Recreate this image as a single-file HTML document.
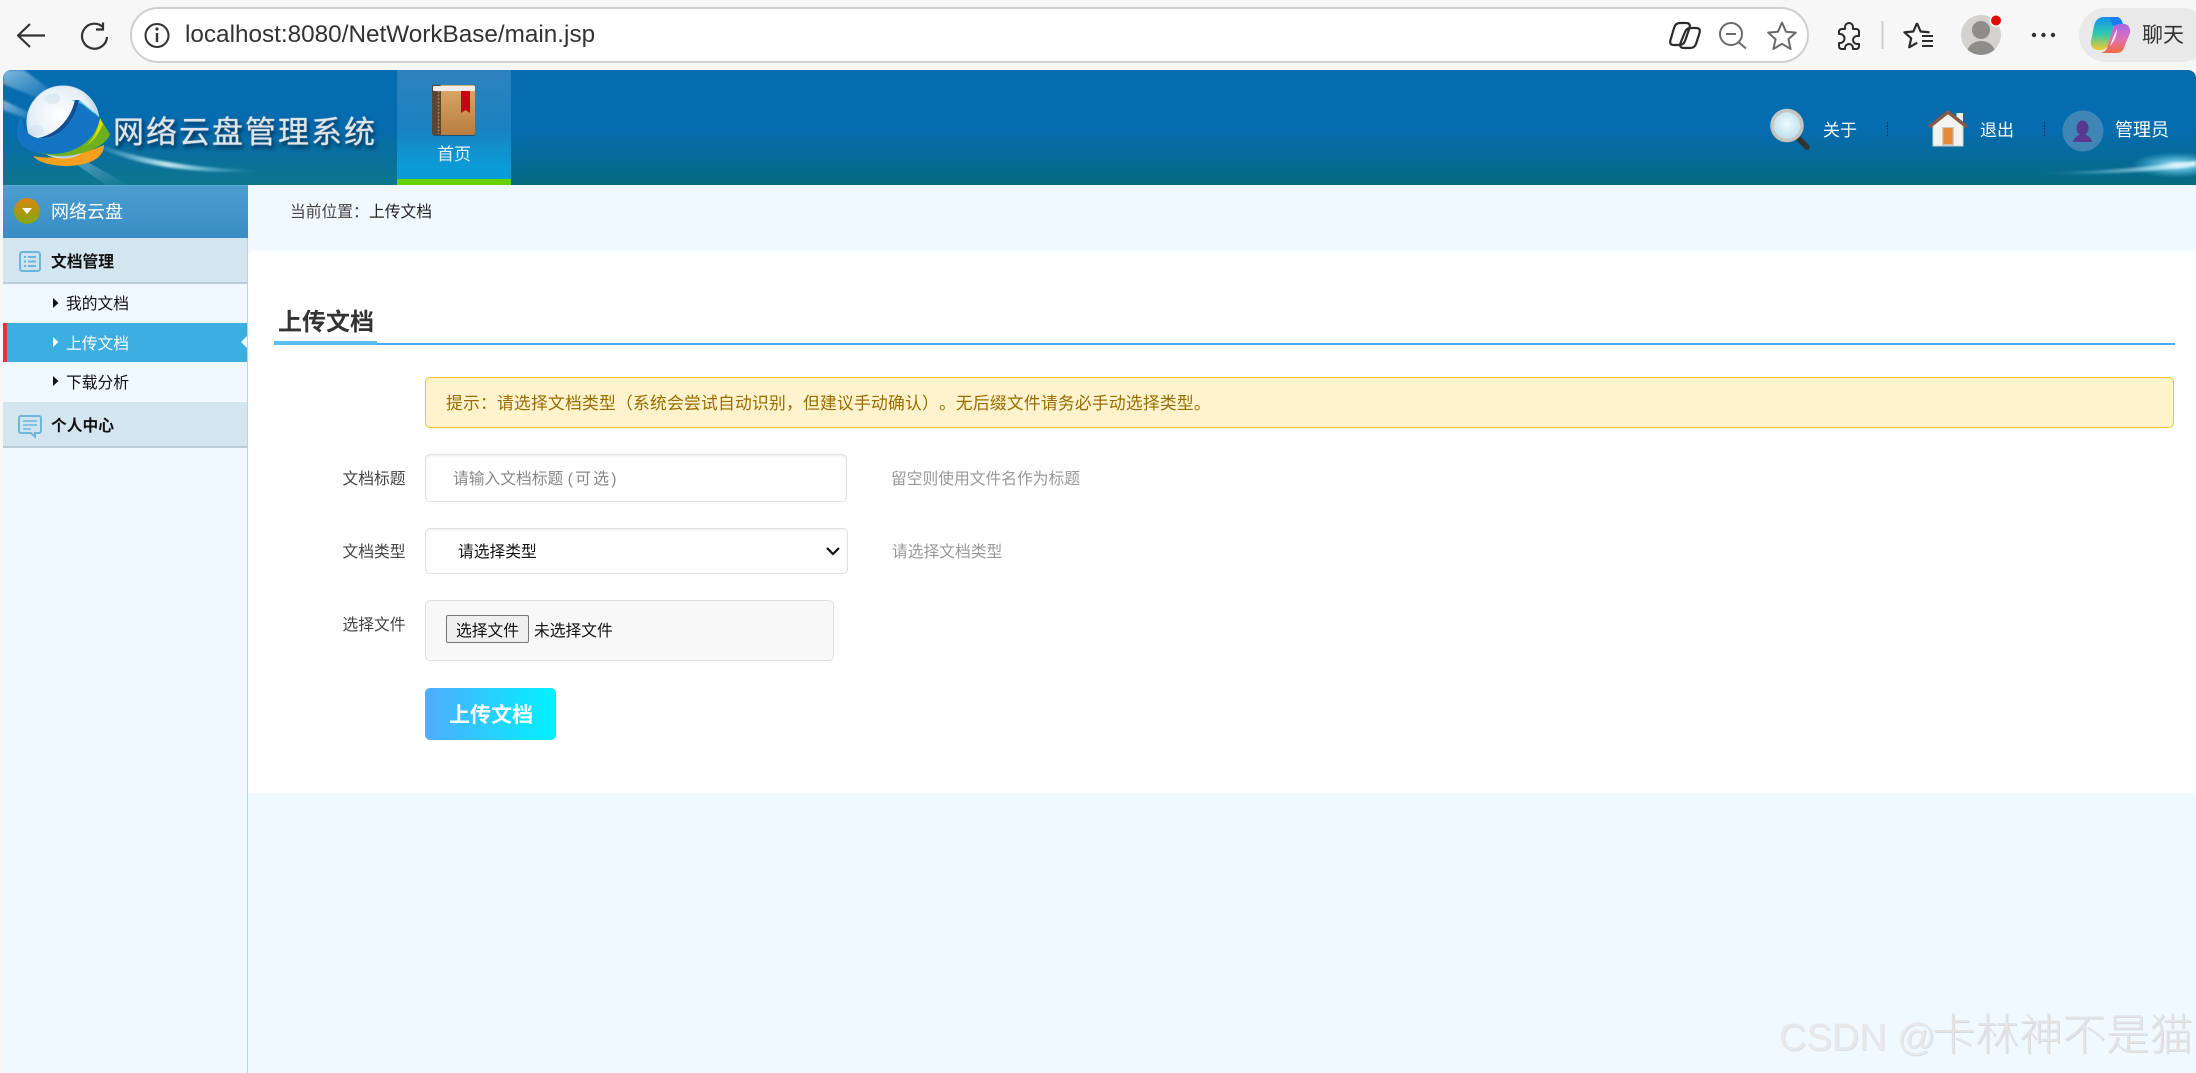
<!DOCTYPE html>
<html lang="zh"><head><meta charset="utf-8"><title>网络云盘管理系统</title>
<style>
html,body{margin:0;padding:0;width:2196px;height:1073px;overflow:hidden;background:#f7f7f7;font-family:"Liberation Sans","Noto Sans CJK SC",sans-serif;text-spacing-trim:space-all}
.a{position:absolute;white-space:nowrap;line-height:1}
.b{position:absolute;box-sizing:border-box}
svg{position:absolute;left:0;top:0}
</style></head><body>
<!-- page backgrounds -->
<div class="b" style="left:3px;top:70px;width:2193px;height:115px;border-radius:8px 8px 0 0;background:linear-gradient(#066cb0 0,#066cb0 50%,#056a90 85%,#066a80 100%)"></div>
<div class="b" style="left:3px;top:185px;width:2193px;height:888px;background:#f0f9ff"></div>
<div class="b" style="left:397px;top:70px;width:114px;height:115px;background:linear-gradient(#2e82bc,#1a82c2 55%,#0b9cd8 90%);border-bottom:6px solid #66d200"></div>
<!-- sidebar -->
<div class="b" style="left:3px;top:185px;width:245px;height:888px;border-right:1px solid #b4d6e6"></div>
<div class="b" style="left:3px;top:185px;width:245px;height:53px;background:linear-gradient(#4a9ed0,#388dc4);border-top:1px solid #5aa8dc"></div>
<div class="b" style="left:3px;top:238px;width:244px;height:46px;background:#d3e5ef;border-bottom:2px solid #b9ccd8"></div>
<div class="b" style="left:3px;top:323px;width:244px;height:39px;background:#3daee2;border-left:4px solid #e2343c"></div>
<div class="b" style="left:3px;top:402px;width:244px;height:46px;background:#d3e5ef;border-bottom:2px solid #b9ccd8"></div>
<!-- card -->
<div class="b" style="left:248px;top:251px;width:1948px;height:542px;background:#fff;border-radius:6px 0 0 0"></div>
<div class="b" style="left:274px;top:343px;width:1901px;height:2px;background:#4da8f4"></div>
<div class="b" style="left:274px;top:341px;width:103px;height:3.500px;background:#5cbcf2"></div>
<div class="b" style="left:425px;top:377px;width:1749px;height:51px;background:#fff3cd;border:1px solid #f5c230;border-radius:5px"></div>
<div class="b" style="left:425px;top:454px;width:422px;height:48px;background:#fff;border:1px solid #e0e0e0;border-radius:5px;box-shadow:inset 0 2px 3px rgba(0,0,0,.05)"></div>
<div class="b" style="left:425px;top:528px;width:423px;height:46px;background:#fff;border:1px solid #e0e0e0;border-radius:5px;box-shadow:inset 0 2px 3px rgba(0,0,0,.04)"></div>
<div class="b" style="left:425px;top:600px;width:409px;height:61px;background:#f8f8f8;border:1px solid #e0e0e0;border-radius:5px"></div>
<div class="b" style="left:446px;top:615px;width:83px;height:28px;background:#efefef;border:1px solid #767676;border-radius:2px"></div>
<div class="b" style="left:425px;top:688px;width:131px;height:52px;border-radius:5px;background:linear-gradient(90deg,#4facfe,#00f2fe)"></div>
<!-- toolbar -->
<div class="b" style="left:130px;top:7px;width:1679px;height:56px;background:#fff;border:2px solid #cfcfcf;border-radius:28px"></div>
<div class="b" style="left:2079px;top:8px;width:130px;height:54px;background:#e9e9e9;border-radius:27px"></div>

<svg width="2196" height="1073" viewBox="0 0 2196 1073" fill="none">
<defs>
<linearGradient id="gl" x1="0" y1="0" x2="0" y2="1"><stop offset="0" stop-color="#1590f0"/><stop offset=".5" stop-color="#2cc8b0"/><stop offset="1" stop-color="#f6c92a"/></linearGradient>
<linearGradient id="gr" x1="0" y1="0" x2="0" y2="1"><stop offset="0" stop-color="#a468ea"/><stop offset=".55" stop-color="#e070b0"/><stop offset="1" stop-color="#f46a38"/></linearGradient>
<linearGradient id="book" x1="0" y1="0" x2="0" y2="1"><stop offset="0" stop-color="#dcaa6c"/><stop offset="1" stop-color="#b87c3e"/></linearGradient>
<linearGradient id="ball" x1="0" y1="0" x2="0" y2="1"><stop offset="0" stop-color="#d8860e"/><stop offset="1" stop-color="#82aa12"/></linearGradient>
<radialGradient id="globe" cx=".45" cy=".4" r=".7"><stop offset="0" stop-color="#fff"/><stop offset=".6" stop-color="#e4eef6"/><stop offset="1" stop-color="#7ea6ca"/></radialGradient>
<radialGradient id="lens" cx=".5" cy=".45" r=".6"><stop offset="0" stop-color="#eef9fd"/><stop offset="1" stop-color="#b5dcec"/></radialGradient>
<radialGradient id="flare" cx=".5" cy=".5" r=".5"><stop offset="0" stop-color="#fff" stop-opacity="1"/><stop offset=".35" stop-color="#8ee0f8" stop-opacity=".7"/><stop offset="1" stop-color="#5cc8ee" stop-opacity="0"/></radialGradient>
<linearGradient id="sw" x1="0" y1="0" x2="1" y2="0"><stop offset="0" stop-color="#9fe4f6" stop-opacity=".15"/><stop offset=".4" stop-color="#d8f4fb" stop-opacity=".9"/><stop offset="1" stop-color="#6cc8e8" stop-opacity="0"/></linearGradient>
<linearGradient id="sw2" x1="0" y1="0" x2="1" y2="0"><stop offset="0" stop-color="#6cc8e8" stop-opacity="0"/><stop offset="1" stop-color="#e4f8fe" stop-opacity=".95"/></linearGradient>
<linearGradient id="ray" x1="0" y1="0" x2="1" y2="1"><stop offset="0" stop-color="#d8eefa" stop-opacity=".6"/><stop offset="1" stop-color="#a0d4f0" stop-opacity="0"/></linearGradient>
<linearGradient id="ray2" x1="0" y1="0" x2="1" y2="1"><stop offset="0" stop-color="#9ed4e4" stop-opacity=".5"/><stop offset="1" stop-color="#9ed4e4" stop-opacity="0"/></linearGradient>
<linearGradient id="spread" x1="0" y1="0" x2="0" y2="1"><stop offset="0" stop-color="#2a94b8" stop-opacity="0"/><stop offset="1" stop-color="#2a9ab8" stop-opacity=".55"/></linearGradient>
<filter id="bl" x="-10%" y="-50%" width="120%" height="200%"><feGaussianBlur stdDeviation="1"/></filter>
<clipPath id="logoClip"><path d="M3 185V78a8 8 0 0 1 8-8H397V185Z"/></clipPath>
<clipPath id="av"><circle cx="1981" cy="35" r="20"/></clipPath>
</defs>

<!-- browser toolbar icons -->
<path d="M45 35.500H19M30 24 18 35.500 30 47" stroke="#333" stroke-width="2.200" stroke-linejoin="round"/>
<path d="M103 27a12.500 12.500 0 1 0 4 10" stroke="#333" stroke-width="2.200" fill="none"/><path d="M103 22.500v7h-7" stroke="#333" stroke-width="2.200"/>
<circle cx="157" cy="35.500" r="11.500" stroke="#333" stroke-width="2"/><path d="M157 33v9" stroke="#333" stroke-width="2.400"/><circle cx="157" cy="29" r="1.600" fill="#333"/>
<g stroke="#2b2b2b" stroke-width="2.200" fill="none" stroke-linejoin="round">
<path d="M1680 23H1686Q1691 23 1689.500 28L1685 41Q1683.500 45 1679 45H1674Q1669 45 1670.500 40L1674 28Q1675.500 23 1680 23Z"/>
<path d="M1684 48H1690Q1694.500 48 1696 44L1699.500 33Q1701 28 1696 28H1691Q1686.500 28 1685 32L1680.500 43Q1679 48 1684 48Z"/>
</g>
<circle cx="1731" cy="34" r="11" stroke="#6a6a6a" stroke-width="2"/><path d="M1726 34h10M1739 42.500l7 6" stroke="#6a6a6a" stroke-width="2"/>
<path d="M1782 22.500l4 9.200 9.800.9-7.400 6.600 2.200 9.800-8.600-5.200-8.600 5.200 2.200-9.800-7.400-6.600 9.800-.9z" stroke="#6a6a6a" stroke-width="2" stroke-linejoin="round"/>
<path d="M1842 29h3v-2a4 4 0 0 1 8 0v2h3c2 0 3 1 3 3v4h-2a4 4 0 0 0 0 8h2v2c0 2-1 3-3 3h-3v-1a4 4 0 0 0-8 0v1h-3c-2 0-3-1-3-3v-3h1a4.500 4.500 0 0 0 0-9h-1v-2c0-2 1-3 3-3z" stroke="#2b2b2b" stroke-width="2" stroke-linejoin="round"/>
<path d="M1882.500 21v28" stroke="#cdcdcd" stroke-width="2"/>
<path d="M1917 23l3.600 8.500 9 .8M1917 23l-3.600 8.500-9 .8 6.800 6-2 9 8-4.600" stroke="#2b2b2b" stroke-width="2.200" stroke-linejoin="round"/><path d="M1922 36h11M1922 41h11M1922 46h11" stroke="#2b2b2b" stroke-width="2"/>
<circle cx="1981" cy="35" r="20" fill="#d3d2cf"/>
<g clip-path="url(#av)"><circle cx="1981" cy="30" r="9" fill="#8f8d8a"/><ellipse cx="1981" cy="53" rx="14" ry="12" fill="#8f8d8a"/></g>
<circle cx="1996" cy="20.500" r="6.500" fill="#f7f7f7"/><circle cx="1996" cy="20.500" r="5" fill="#e20b0b"/>
<circle cx="2034" cy="35" r="2.200" fill="#333"/><circle cx="2043.500" cy="35" r="2.200" fill="#333"/><circle cx="2053" cy="35" r="2.200" fill="#333"/>
<path d="M2104 17C2098 17 2095 21 2094 26L2091 41C2090 47 2094 50 2098 50H2101C2105 50 2108 47 2109 43L2114 24C2115 21 2118 19 2121 19L2118 17Z" fill="url(#gl)"/>
<path d="M2109 17H2116C2120 17 2122 20 2123 24L2125 30 2114 27 2112 24Z" fill="#1a7ef0"/>
<path d="M2117 53C2121 53 2124 50 2125 45L2130 33C2131 28 2128 24 2124 24H2119C2115 24 2113 27 2112 31L2107 48C2106 51 2103 53 2100 53Z" fill="url(#gr)"/>
<path d="M2117 29c-3 6-5 11-7 17 4-4 7-11 7-17z" fill="#fff" opacity=".9"/>

<!-- logo area -->
<g clip-path="url(#logoClip)">
<path d="M3 70H24L56 94 48 102 3 84Z" fill="url(#ray)" filter="url(#bl)"/>
<path d="M3 100 40 118 34 122 3 110Z" fill="url(#ray)" filter="url(#bl)"/>
<path d="M3 130H397V185H3Z" fill="url(#spread)" opacity=".45"/>
<path d="M70 160 84 160 128 185H106Z" fill="url(#ray2)"/>
<path d="M104 146C150 162 200 168 262 171 205 174 150 169 104 150Z" fill="url(#sw)" filter="url(#bl)"/>
</g>
<path d="M33 156C50 160 80 156 104 145 104 158 90 165 68 166 50 166 38 162 33 156Z" fill="#f5a01e"/>
<circle cx="63" cy="122" r="36" fill="url(#globe)" stroke="#cfe2ee" stroke-width="1"/>
<path d="M30 128c4-5 10-4 13 0 2 5-3 8-7 8s-8-3-6-8zM46 96c6-4 12-3 14 1s-4 8-9 7-8-5-5-8z" fill="#cfe0ee" opacity=".55"/>
<path d="M28 148C52 158 90 150 100 118L110 134C106 150 60 166 28 148Z" fill="#6fb01e"/>
<path d="M100 118 103 124C98 136 92 142 86 146 95 138 98 128 100 118Z" fill="#d8e000"/>
<path d="M22 115C21 125 26 136 38 138 56 140 74 126 79 100L100 118C96 140 76 154 52 154 34 154 16 148 17 132 17 125 19 120 22 115Z" fill="#1474c4"/>
<path d="M71 100 79 100 100 117 92 112 82 104Z" fill="#48c4ee"/>
<path d="M38 138C56 140 74 126 79 100L75 100C70 122 54 135 38 138Z" fill="#0c4f94"/>
<!-- book -->
<rect x="433" y="87" width="42" height="49" rx="2" fill="#000" opacity=".35"/>
<rect x="432" y="85" width="43" height="50" rx="2" fill="url(#book)"/>
<rect x="432" y="85" width="9" height="50" rx="1.500" fill="#5a4632"/><path d="M438.500 91v43" stroke="#a57c4c" stroke-width="1.600" stroke-dasharray="2 1.500"/>
<rect x="433" y="86" width="42" height="5" rx="1" fill="#f0eeea"/>
<path d="M461 91h9v22l-4.500-3-4.500 3z" fill="#c80414"/>

<!-- header right icons -->
<path d="M1798 138l9 9" stroke="#333" stroke-width="5.500" stroke-linecap="round"/>
<circle cx="1787" cy="125.500" r="15" fill="url(#lens)" stroke="#c4c4c0" stroke-width="3.500"/>
<rect x="1956.500" y="113" width="6.500" height="11" fill="#eee"/>
<path d="M1933 124 1948 113 1963 124V146H1933Z" fill="#f3f3f0" stroke="#cfcfcb"/>
<path d="M1929 127 1948 112 1967 127" stroke="#86584a" stroke-width="3.500" stroke-linejoin="round"/>
<rect x="1942" y="127" width="12" height="19" fill="#c9c6c0"/><rect x="1943.500" y="128" width="9" height="16" fill="#e88a35"/>
<path d="M1887.500 122v14M2044.500 122v14" stroke="#0c3a5a" stroke-width="1" stroke-dasharray="2 1"/>
<circle cx="2083" cy="131" r="20.500" fill="#3f86b6"/>
<ellipse cx="2082.500" cy="128" rx="6" ry="7.500" fill="#5b3890"/>
<path d="M2073 142c1-5 5-7 9.500-8 5 1 8.500 3 9.500 8z" fill="#5b3890"/>
<ellipse cx="2177" cy="165" rx="46" ry="13" fill="url(#flare)"/>
<path d="M2035 173C2090 172 2140 168 2196 161V166C2140 173 2090 175 2035 173Z" fill="url(#sw2)" filter="url(#bl)"/>

<!-- sidebar icons -->
<circle cx="27" cy="211" r="13" fill="url(#ball)"/><path d="M22 208h10l-5 6z" fill="#fff"/>
<rect x="20" y="252" width="20" height="19" rx="2.500" fill="#cfe4f0" stroke="#6cb6dc" stroke-width="2"/>
<path d="M24 257h2M24 261.500h2M24 266h2M28 257h8M28 261.500h8M28 266h8" stroke="#6cb6dc" stroke-width="2"/>
<path d="M21 416h18a2 2 0 0 1 2 2v13a2 2 0 0 1-2 2h-4v3.500l-4-3.500H21a2 2 0 0 1-2-2v-13a2 2 0 0 1 2-2z" fill="#cfe4f0" stroke="#6cb6dc" stroke-width="2"/>
<path d="M23 421h14M23 425h14M23 429h8" stroke="#6cb6dc" stroke-width="1.500"/>
<path d="M53 298l5.500 5-5.500 5z" fill="#111"/><path d="M53 337l5.500 5-5.500 5z" fill="#fff"/><path d="M53 376l5.500 5-5.500 5z" fill="#111"/>
<path d="M247 336l-6 6 6 6z" fill="#f0f9ff"/>
<!-- chevron -->
<path d="M827 548l6 6 6-6" stroke="#111" stroke-width="2.200"/>
</svg>

<!-- texts -->
<div class="a" style="left:185px;top:23px;font-size:24.300px;color:#333">localhost:8080/NetWorkBase/main.jsp</div>
<div class="a" style="left:2142px;top:25px;font-size:21px;color:#333">聊天</div>
<div class="a" style="left:113px;top:117px;font-size:31px;letter-spacing:2px;color:#dfe5e9;text-shadow:0 0 1px #dfe5e9,2px 3px 4px rgba(0,20,50,.8)">网络云盘管理系统</div>
<div class="a" style="left:437px;top:146px;font-size:17px;color:#e4f4fb">首页</div>
<div class="a" style="left:1823px;top:122px;font-size:17px;color:#fff">关于</div>
<div class="a" style="left:1980px;top:122px;font-size:17px;color:#fff">退出</div>
<div class="a" style="left:2115px;top:121px;font-size:18px;color:#fff">管理员</div>

<div class="a" style="left:51px;top:203px;font-size:18px;color:#fff">网络云盘</div>
<div class="a" style="left:51px;top:254.500px;font-size:15.750px;font-weight:700;color:#111">文档管理</div>
<div class="a" style="left:66px;top:296.500px;font-size:15.750px;color:#111">我的文档</div>
<div class="a" style="left:66px;top:336.500px;font-size:15.750px;color:#fff">上传文档</div>
<div class="a" style="left:66px;top:375.500px;font-size:15.750px;color:#111">下载分析</div>
<div class="a" style="left:51px;top:418.500px;font-size:15.750px;font-weight:700;color:#111">个人中心</div>

<div class="a" style="left:290px;top:205px;font-size:15.750px;color:#444">当前位置&#xFF1A;</div>
<div class="a" style="left:369px;top:205px;font-size:15.750px;color:#222">上传文档</div>
<div class="a" style="left:278px;top:311px;font-size:24px;font-weight:700;color:#333">上传文档</div>

<div class="a" style="left:446px;top:396px;font-size:16.800px;letter-spacing:.22px;color:#9a6d00">提示&#xFF1A;请选择文档类型&#xFF08;系统会尝试自动识别&#xFF0C;但建议手动确认&#xFF09;<span style="display:inline-block;width:16.800px">&#x3002;</span>无后缀文件请务必手动选择类型&#x3002;</div>
<div class="a" style="left:342.500px;top:471.500px;font-size:15.750px;color:#444">文档标题</div>
<div class="a" style="left:453px;top:471.500px;font-size:15.750px;color:#888">请输入文档标题 <span style="letter-spacing:2.300px">(可选)</span></div>
<div class="a" style="left:891px;top:471.500px;font-size:15.750px;color:#999">留空则使用文件名作为标题</div>
<div class="a" style="left:342.500px;top:544.500px;font-size:15.750px;color:#444">文档类型</div>
<div class="a" style="left:458px;top:544.500px;font-size:15.750px;color:#111">请选择类型</div>
<div class="a" style="left:892px;top:544.500px;font-size:15.750px;color:#999">请选择文档类型</div>
<div class="a" style="left:342.500px;top:617.500px;font-size:15.750px;color:#444">选择文件</div>
<div class="a" style="left:456px;top:623.500px;font-size:15.750px;color:#111">选择文件</div>
<div class="a" style="left:534px;top:623.500px;font-size:15.750px;color:#111">未选择文件</div>
<div class="a" style="left:449px;top:705px;font-size:21px;font-weight:700;color:#fff">上传文档</div>

<div class="a" style="left:1779px;top:1019px;font-size:38px;font-weight:400;color:#e6e8ea;text-shadow:1px 1px 0 rgba(190,190,190,.4)">CSDN @</div>
<div class="a" style="left:1932px;top:1015px;font-size:43.500px;font-weight:300;color:#e2e4e6;text-shadow:1px 1px 0 rgba(190,190,190,.5)">卡林神不是猫</div>
</body></html>
